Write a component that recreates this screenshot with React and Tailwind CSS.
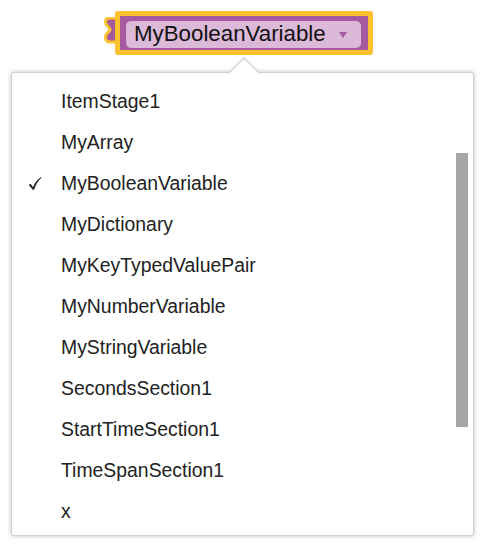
import React from "react";

const items = [
  "ItemStage1",
  "MyArray",
  "MyBooleanVariable",
  "MyDictionary",
  "MyKeyTypedValuePair",
  "MyNumberVariable",
  "MyStringVariable",
  "SecondsSection1",
  "StartTimeSection1",
  "TimeSpanSection1",
  "x",
];

function Check() {
  return (
    <svg width="14" height="15" viewBox="0 0 14 15" className="block">
      <path
        d="M0.8 9 L2.6 7.8 L5 10.9 C6.8 6.8 9.5 3.2 13 1 L13.5 1.7 C10.3 4.4 7.9 8.5 6.2 13.8 L4.7 13.8 Z"
        fill="#2a2a2a"
      />
    </svg>
  );
}

export default function App() {
  return (
    <div
      className="w-[490px] h-[554px] bg-white relative overflow-hidden"
      style={{ fontFamily: '"Liberation Sans", Arial, sans-serif' }}
    >
      {/* Block */}
      <div className="pt-[11px] pl-[104px] flex">
        <div className="relative flex items-center">
          <svg
            width="16"
            height="30"
            viewBox="0 0 16 30"
            className="absolute left-0 top-[6px]"
          >
            <path
              d="M14 1 L6 1 C3 1 1.5 2.5 1.5 5 C1.5 8 3.5 9 5 10.5 C6.2 11.8 6.2 13.2 5 14.5 C3.5 16 1.5 17 1.5 20 C1.5 23 3 25 6 25 L14 25 Z"
              fill="#a5599e"
              stroke="#f9c22e"
              strokeWidth="3"
              strokeLinejoin="round"
            />
          </svg>
          <div className="ml-[11px] border-[5px] border-[#f9c22e] rounded-[3px] bg-[#a5599e] pt-[5px] pb-[2px] pl-[6px] pr-[7px] relative">
            <div className="h-[27px] w-[235px] rounded-[5px] bg-[#dcb9d8] flex items-center pl-[8px]">
              <span className="text-[22.3px] leading-none text-[#111]">
                MyBooleanVariable
              </span>
              <span className="ml-auto mr-[14px] w-0 h-0 border-l-[4px] border-r-[4px] border-t-[6px] border-l-transparent border-r-transparent border-t-[#a5599e]" />
            </div>
          </div>
        </div>
      </div>

      {/* Menu */}
      <div className="absolute left-[11px] top-[72px] w-[463px] h-[464px] bg-white border border-[#cfcfcf] rounded-[3px] shadow-[0_0_4px_rgba(0,0,0,0.25)]">
        <div className="absolute left-[221px] top-[-11px] w-[22px] h-[22px] rotate-45 bg-white border-l border-t border-[#cfcfcf] shadow-[-1px_-1px_2px_rgba(0,0,0,0.08)]" />
        <div className="relative pt-[8px] flex flex-col">
          {items.map((it) => (
            <div key={it} className="h-[41px] flex items-center relative pl-[49px]">
              {it === "MyBooleanVariable" && (
                <div className="absolute left-[16px] top-[13px]">
                  <Check />
                </div>
              )}
              <span className="text-[19.4px] leading-none text-[#222]">{it}</span>
            </div>
          ))}
        </div>
        <div className="absolute left-[444px] top-[80px] w-[12px] h-[274px] bg-[#a6a6a6]" />
      </div>
    </div>
  );
}
